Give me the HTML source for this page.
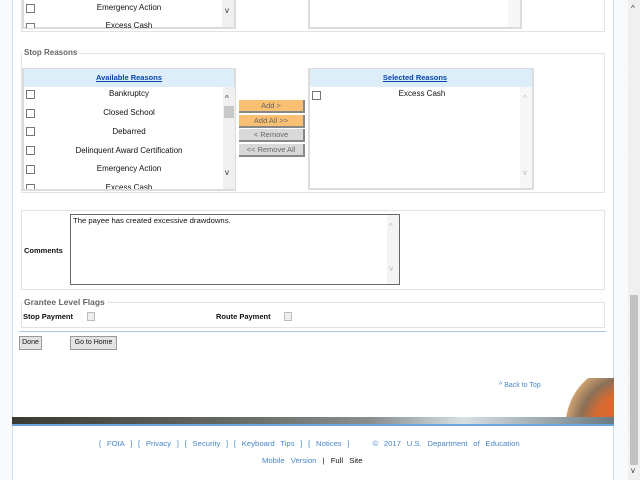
<!DOCTYPE html>
<html><head><style>
*{margin:0;padding:0;box-sizing:border-box}
body{width:640px;height:480px;overflow:hidden;position:relative;font-family:"Liberation Sans",Verdana,sans-serif;font-size:8px;color:#111;background:repeating-linear-gradient(45deg,#f4f6f8 0 1px,#fbfcfd 1px 3px)}
.a{position:absolute}
.main{left:12px;top:0;width:602px;height:480px;background:#fff;border-left:1px solid #cfe0f0;border-right:1px solid #cfe0f0}
.fs{border:1px solid #e3e3e3}
.lg{background:#fff;color:#666;font-weight:bold;font-size:8px;padding:0 2px}
.box{border:2px solid #dcdcdc;border-top-width:1px;background:#fff}
.hd{background:#ddeef8;height:18px;text-align:center;line-height:18px;color:#0645ad;font-weight:bold;text-decoration:underline;font-size:7.5px}
.cb{width:9px;height:9px;border:1px solid #777;background:#fff}
.it{width:190px;text-align:center;font-size:8px}
.sb{background:#f0f0f0}
.btn{width:66px;height:13px;text-align:center;line-height:12px;font-size:7.5px;color:#666;border-right:2px solid #888;border-bottom:2px solid #888}
.ft{color:#4a86c6;font-size:7.5px;word-spacing:4px}
</style></head><body>
<div class="a main"></div>
<div class="a fs" style="left:21px;top:-5px;width:584px;height:37px"></div>
<div class="a box" style="left:22px;top:-5px;width:214px;height:34px"></div>
<div class="a sb" style="left:222px;top:-3px;width:12px;height:30px"></div>
<div class="a" style="left:225px;top:6px;font-size:8px;color:#333">v</div>
<div class="a cb" style="left:26px;top:4px"></div><div class="a it" style="left:34px;top:3px">Emergency Action</div>
<div class="a cb" style="left:26px;top:23px;height:5px;border-bottom:none"></div><div class="a it" style="left:34px;top:21px;height:7px;overflow:hidden">Excess Cash</div>
<div class="a box" style="left:308px;top:-5px;width:214px;height:34px"></div>
<div class="a sb" style="left:508px;top:-3px;width:12px;height:30px;background:#f7f7f7"></div>

<div class="a fs" style="left:21px;top:53px;width:584px;height:140px"></div>
<div class="a lg" style="left:22px;top:48px">Stop Reasons</div>
<div class="a box" style="left:22px;top:68px;width:214px;height:123px"></div>
<div class="a hd" style="left:24px;top:69px;width:210px">Available Reasons</div>
<div class="a sb" style="left:223px;top:87px;width:12px;height:102px"></div>
<div class="a" style="left:224px;top:106px;width:10px;height:12px;background:#c8c8c8"></div>
<div class="a" style="left:225px;top:94px;font-size:8px;color:#333">^</div>
<div class="a" style="left:225px;top:168px;font-size:8px;color:#333">v</div>
<div class="a cb" style="left:26px;top:90px"></div><div class="a it" style="left:34px;top:89px">Bankruptcy</div>
<div class="a cb" style="left:26px;top:109px"></div><div class="a it" style="left:34px;top:108px">Closed School</div>
<div class="a cb" style="left:26px;top:127px"></div><div class="a it" style="left:34px;top:127px">Debarred</div>
<div class="a cb" style="left:26px;top:146px"></div><div class="a it" style="left:34px;top:146px">Delinquent Award Certification</div>
<div class="a cb" style="left:26px;top:165px"></div><div class="a it" style="left:34px;top:164px">Emergency Action</div>
<div class="a cb" style="left:26px;top:184px;height:5px;border-bottom:none"></div><div class="a it" style="left:34px;top:183px;height:6px;overflow:hidden">Excess Cash</div>

<div class="a btn" style="left:239px;top:100px;background:#f9c074">Add &gt;</div>
<div class="a btn" style="left:239px;top:115px;background:#f9c074">Add All &gt;&gt;</div>
<div class="a btn" style="left:239px;top:129px;background:#d9d9d9">&lt; Remove</div>
<div class="a btn" style="left:239px;top:144px;background:#d9d9d9">&lt;&lt; Remove All</div>

<div class="a box" style="left:308px;top:68px;width:226px;height:122px"></div>
<div class="a hd" style="left:310px;top:69px;width:210px">Selected Reasons</div>
<div class="a" style="left:520px;top:69px;width:12px;height:18px;background:#ddeef8"></div>
<div class="a" style="left:520px;top:87px;width:12px;height:101px;background:#f7f7f7"></div>
<div class="a" style="left:523px;top:94px;font-size:8px;color:#bbb">^</div>
<div class="a" style="left:523px;top:168px;font-size:8px;color:#bbb">v</div>
<div class="a cb" style="left:312px;top:91px"></div><div class="a it" style="left:327px;top:89px">Excess Cash</div>

<div class="a fs" style="left:21px;top:210px;width:584px;height:80px"></div>
<div class="a" style="left:24px;top:246px;font-weight:bold;font-size:7.5px">Comments</div>
<div class="a" style="left:70px;top:214px;width:330px;height:71px;border:1px solid #666;background:#fff"></div>
<div class="a" style="left:387px;top:215px;width:12px;height:69px;background:#f4f4f4"></div>
<div class="a" style="left:389px;top:222px;font-size:8px;color:#bbb">^</div>
<div class="a" style="left:389px;top:264px;font-size:8px;color:#bbb">v</div>
<div class="a" style="left:73px;top:216px;font-size:7.7px">The payee has created excessive drawdowns.</div>

<div class="a fs" style="left:21px;top:302px;width:584px;height:26px"></div>
<div class="a lg" style="left:22px;top:297px;font-size:8.5px">Grantee Level Flags</div>
<div class="a" style="left:23px;top:312px;font-weight:bold;font-size:7.5px">Stop Payment</div>
<div class="a" style="left:87px;top:312px;width:8px;height:9px;border:1px solid #bbb;background:#eee"></div>
<div class="a" style="left:216px;top:312px;font-weight:bold;font-size:7.5px">Route Payment</div>
<div class="a" style="left:284px;top:312px;width:8px;height:9px;border:1px solid #bbb;background:#eee"></div>
<div class="a" style="left:19px;top:331px;width:587px;height:1px;background:#a8c4e4"></div>
<div class="a" style="left:19px;top:336px;width:23px;height:14px;background:#e4e4e4;border:1px solid #999;font-size:7px;text-align:center;line-height:12px">Done</div>
<div class="a" style="left:70px;top:336px;width:47px;height:14px;background:#e4e4e4;border:1px solid #999;font-size:7px;text-align:center;line-height:12px">Go to Home</div>

<div class="a ft" style="left:499px;top:382px;font-size:7px;word-spacing:0">^ Back to Top</div>
<div class="a" style="left:544px;top:378px;width:70px;height:40px;background:radial-gradient(circle at 120% 120%,#d86a30 0 35%,#8a7058 50%,#caa070 64%,#fff 65%)"></div>
<div class="a" style="left:12px;top:417px;width:602px;height:7px;background:linear-gradient(90deg,#3a3a32,#6a6f68 40%,#8a9090 60%,#d8e0e4 75%,#6a7a80)"></div>
<div class="a" style="left:12px;top:424px;width:602px;height:2px;background:#6aa6e0"></div>
<div class="a ft" style="left:99px;top:439px;font-size:7.7px;word-spacing:3.6px">[ FOIA ] [ Privacy ] [ Security ] [ Keyboard Tips ] [ Notices ] &nbsp; &nbsp;© 2017 U.S. Department of Education</div>
<div class="a ft" style="left:262px;top:456px;font-size:7.7px;word-spacing:4px">Mobile Version <span style="color:#111">| Full Site</span></div>

<div class="a" style="left:628px;top:0;width:12px;height:480px;background:#f0f0f0"></div>
<div class="a" style="left:630px;top:295px;width:8px;height:170px;background:#c2c2c2"></div>
<div class="a" style="left:631px;top:4px;font-size:8px;color:#333">^</div>
<div class="a" style="left:631px;top:466px;font-size:8px;color:#333">v</div>
</body></html>
